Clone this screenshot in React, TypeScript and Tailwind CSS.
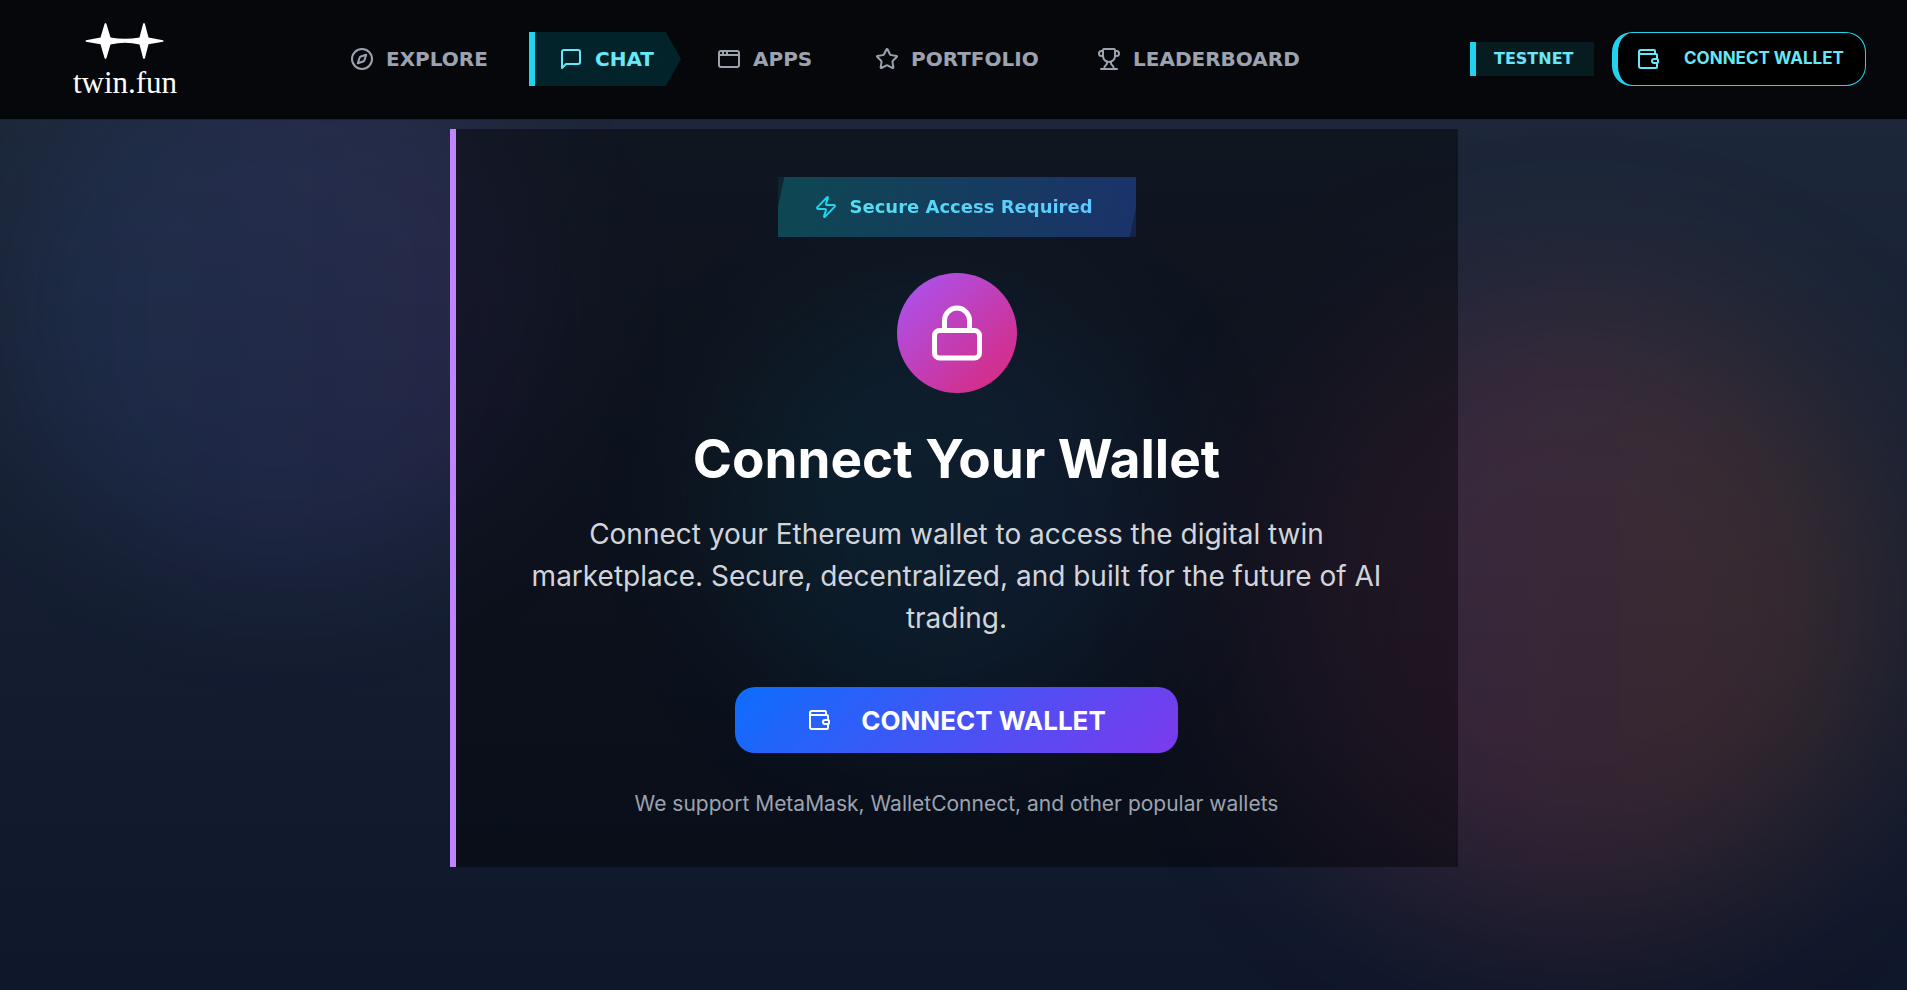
import React from 'react';
import { AppWindow, Compass, Lock, Star, Trophy, Wallet, Zap } from 'lucide-react';
import { clsx } from 'clsx';

const MessageIcon: React.FC<{ className?: string }> = ({ className }) => (
  <svg className={className} viewBox="0 0 24 24" fill="none" stroke="currentColor" strokeWidth="2" strokeLinecap="round" strokeLinejoin="round" aria-hidden="true">
    <path d="M21 15a2 2 0 0 1-2 2H7l-4 4V5a2 2 0 0 1 2-2h14a2 2 0 0 1 2 2z" />
  </svg>
);

const navItems = [
  { label: 'Explore', icon: Compass, width: 'min-w-[191px]' },
  { label: 'Chat', icon: MessageIcon, width: 'min-w-[152px]', active: true },
  { label: 'Apps', icon: AppWindow, width: 'min-w-[146px]' },
  { label: 'Portfolio', icon: Star, width: 'min-w-[210px]' },
  { label: 'Leaderboard', icon: Trophy, width: 'min-w-[232px]' },
];

const Logo = () => (
  <a href="#home" className="flex w-28 flex-col items-center pt-3 text-white">
    <svg className="h-9 w-20" viewBox="0 0 80 36" fill="currentColor" aria-hidden="true">
      <path d="M1 17.2 L15.5 14.6 L19.6 0.8 Q20.5 -0.8 21.4 0.8 L25.5 14.4 Q40 17.2 54.5 14.4 L58.1 0.8 Q59 -0.8 59.9 0.8 L63.5 14.6 L78 17.2 Q79 18 78 18.8 L63.5 21.2 L59.9 35.2 Q59 36.8 58.1 35.2 L54.5 21.4 Q40 18.2 25.5 21.4 L21.4 35.2 Q20.5 36.8 19.6 35.2 L15.5 21.2 L1 18.8 Q0 18 1 17.2 Z" />
    </svg>
    <span className="font-['Liberation_Serif',serif] text-[31px] leading-[48px]">twin.fun</span>
  </a>
);

const Header = () => (
  <header className="relative flex h-[120px] items-center justify-between border-b border-[#0c2a33] bg-[#05070b] pr-[41px] pb-px pl-[69px]">
    <div className="flex items-center gap-[145px]">
      <Logo />
      <nav className="flex items-center gap-3 font-['DejaVu_Sans',sans-serif] text-xl font-bold uppercase">
        {navItems.map(({ label, icon: Icon, width, active }) => (
          <a
            key={label}
            href={`#${label.toLowerCase()}`}
            className={clsx(
              'flex h-[54px] items-center gap-3 pl-6',
              width,
              active
                ? 'border-l-[6px] border-[#22d3ee] bg-[#022329] text-[#67e8f9] [clip-path:polygon(0_0,90%_0,100%_50%,90%_100%,0_100%)]'
                : 'text-[#9ca3af]'
            )}
          >
            <Icon className="size-6 shrink-0" />
            {label}
          </a>
        ))}
      </nav>
    </div>

    <div className="flex items-center gap-[18px]">
      <span className="flex h-[34px] w-[124px] items-center border-l-[6px] border-[#22d3ee] bg-[#22d3ee]/10 pl-[18px] font-['DejaVu_Sans',sans-serif] text-base font-bold text-[#67e8f9]">
        TESTNET
      </span>
      <button className="flex h-[54px] min-w-[254px] items-center gap-6 rounded-[20px] border border-l-[6px] border-[#22d3ee] bg-black px-[18px] text-[17px] font-bold text-[#67e8f9]">
        <Wallet className="size-6" />
        CONNECT WALLET
      </button>
    </div>
  </header>
);

const Backdrop = () => (
  <div className="absolute inset-0 overflow-hidden" aria-hidden="true">
    <div className="absolute top-[5%] left-[1%] size-[528px] rounded-full bg-linear-to-r/srgb from-[#3b82f6]/10 to-[#a855f7]/10 blur-3xl" />
    <div className="absolute top-[30%] left-[66%] size-[624px] rounded-full bg-linear-to-r/srgb from-[#ec4899]/16 to-[#f97316]/16 blur-[84px]" />
    <div className="absolute top-[30%] left-[38%] size-[432px] rounded-full bg-linear-to-r/srgb from-[#06b6d4]/15 to-[#3b82f6]/15 blur-3xl" />
  </div>
);

const ConnectCard = () => (
  <section className="relative flex w-full max-w-[1008px] flex-col items-center border-l-[6px] border-[#c084fc] bg-black/42 px-12 py-12 text-center">
    <div className="relative flex h-[60px] min-w-[358px] items-center overflow-hidden bg-linear-to-r/srgb from-[#06b6d4]/10 to-[#2563eb]/20 px-9">
      <div className="absolute inset-0 -skew-x-12 bg-linear-to-r/srgb from-[#0e4752] to-[#1b336a]" />
      <div className="relative flex items-center gap-3 font-['DejaVu_Sans',sans-serif] text-lg font-bold">
        <Zap className="size-6 text-[#22d3ee]" />
        <span className="bg-linear-to-r/srgb from-[#53e0f2] to-[#5cc8ff] bg-clip-text text-transparent">Secure Access Required</span>
      </div>
    </div>

    <div className="mt-9 flex size-[120px] items-center justify-center rounded-full bg-linear-to-br/srgb from-[#a855f7] to-[#db2777]">
      <Lock className="size-[60px] text-white" />
    </div>

    <h1 className="mt-9 text-[53px] leading-[60px] font-bold text-white">Connect Your Wallet</h1>
    <p className="mt-6 max-w-[864px] text-[28px] leading-[42px] text-[#d1d5db]">
      Connect your Ethereum wallet to access the digital twin marketplace. Secure, decentralized, and built for the future of AI trading.
    </p>

    <button className="mt-12 flex h-[66px] items-center gap-[30px] rounded-[20px] bg-linear-135/srgb from-[#0d6efd] to-[#7c3aed] px-[72px] text-[26px] font-bold text-white">
      <Wallet className="size-6" />
      CONNECT WALLET
    </button>

    <p className="mt-9 text-[21px] leading-[30px] text-[#9ca3af]">We support MetaMask, WalletConnect, and other popular wallets</p>
  </section>
);

const App: React.FC = () => (
  <div className="relative min-h-screen bg-linear-to-b/srgb from-[#1e293b] to-[#0f172a] font-['Inter',sans-serif]">
    <Backdrop />
    <Header />
    <main className="relative flex justify-center px-6 pt-[9px] pb-12">
      <ConnectCard />
    </main>
  </div>
);

export default App;
